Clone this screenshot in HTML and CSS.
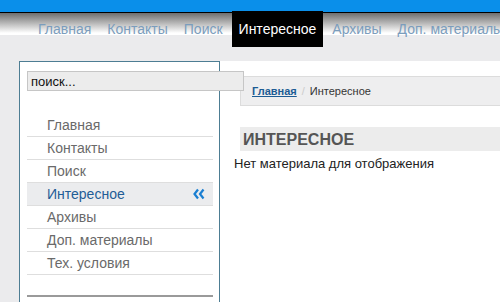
FILE: index.html
```html
<!DOCTYPE html>
<html lang="ru">
<head>
    <meta charset="UTF-8">
    <title>Интересное</title>
    <link rel="stylesheet" href="styles.css">
</head>
<body>
    <div class="topbar"></div>
    <div class="navbar">
        <ul class="nav">
            <li><a href="#">Главная</a></li>
            <li><a href="#">Контакты</a></li>
            <li><a href="#">Поиск</a></li>
            <li class="active"><a href="#">Интересное</a></li>
            <li><a href="#">Архивы</a></li>
            <li><a href="#">Доп. материалы</a></li>
            <li><a href="#">Тех. условия</a></li>
        </ul>
    </div>

    <div class="page">
        <div class="sidebar">
            <input class="search" type="text" value="поиск...">
            <ul class="menu">
                <li><a href="#">Главная</a></li>
                <li><a href="#">Контакты</a></li>
                <li><a href="#">Поиск</a></li>
                <li class="current">
                    <a href="#">Интересное</a>
                    <svg class="chevrons" width="12" height="12" viewBox="0 0 12 12">
                        <path d="M5 1.5 L1.5 6 L5 10.5" fill="none" stroke="#1a7fd2" stroke-width="2.2"/>
                        <path d="M10.5 1.5 L7 6 L10.5 10.5" fill="none" stroke="#1a7fd2" stroke-width="2.2"/>
                    </svg>
                </li>
                <li><a href="#">Архивы</a></li>
                <li><a href="#">Доп. материалы</a></li>
                <li><a href="#">Тех. условия</a></li>
            </ul>
            <div class="module"></div>
        </div>

        <div class="content">
            <div class="breadcrumbs">
                <a href="#">Главная</a>
                <span class="sep">/</span>
                <span>Интересное</span>
            </div>
            <h2 class="title">ИНТЕРЕСНОЕ</h2>
            <p class="empty">Нет материала для отображения</p>
        </div>
    </div>
</body>
</html>
```

FILE: styles.css
```css
html, body {
    overflow: hidden;
}
body {
    margin: 0;
    font-family: "Liberation Sans", Arial, sans-serif;
    background-color: #ebebed;
    height: 302px;
}
.topbar {
    height: 12px;
    background-color: #0a8fea;
}
.navbar {
    height: 22px;
    border-top: 1px solid #000;
    background: linear-gradient(#6e6e6e, #ffffff 20px);
    position: relative;
    z-index: 2;
}
.nav {
    list-style: none;
    margin: 0;
    padding: 0 0 0 31px;
    display: flex;
    white-space: nowrap;
}
.nav li {
    margin: -2px 2px 0 0;
    height: 36px;
}
.nav a {
    display: block;
    padding: 0 7px;
    line-height: 37px;
    font-size: 14px;
    color: #7b9dbd;
    text-decoration: none;
}
.nav .active {
    background-color: #000;
}
.nav .active a {
    color: #fff;
}
.page {
    margin: 26px 0 0 19px;
    width: 960px;
    height: 400px;
    background-color: #fff;
    display: flex;
}
.sidebar {
    width: 201px;
    box-sizing: border-box;
    border: 1px solid #4d7d93;
    padding: 9px 6px 0 7px;
    flex-shrink: 0;
}
.search {
    display: block;
    width: 217px;
    height: 20px;
    box-sizing: border-box;
    margin: 0;
    padding: 0 3px;
    border: 1px solid #c6c6c6;
    background-color: #ececec;
    font-family: "Liberation Sans", Arial, sans-serif;
    font-size: 13px;
    color: #111;
    position: relative;
    z-index: 1;
}
.menu {
    list-style: none;
    margin: 23px 0 0 0;
    padding: 0;
}
.menu li {
    height: 22px;
    border-bottom: 1px solid #dedede;
    display: flex;
    align-items: center;
    justify-content: space-between;
    padding: 0 8px 0 20px;
}
.menu a {
    font-size: 14px;
    color: #6a6a6a;
    text-decoration: none;
}
.menu .current {
    background-color: #ebecee;
}
.menu .current a {
    color: #1f5d96;
}
.module {
    margin-top: 20px;
    border-top: 2px solid #9a9a9a;
}
.content {
    margin-left: 14px;
    padding-top: 15px;
    flex: 1;
}
.breadcrumbs {
    margin-left: 6px;
    height: 28px;
    border: 1px solid #dcdcdc;
    background-color: #eeeeef;
    padding-left: 11px;
    display: flex;
    align-items: center;
    font-size: 11px;
    color: #333;
}
.breadcrumbs a {
    color: #1d5c94;
    font-weight: bold;
}
.sep {
    color: #ccc;
    margin: 0 5px;
}
.title {
    margin: 21px 0 0 6px;
    height: 24px;
    line-height: 25px;
    padding-left: 3px;
    background-color: #ececec;
    font-size: 16px;
    color: #555;
}
.empty {
    margin: 4px 0 0 0;
    font-size: 13px;
    line-height: 18px;
    color: #222;
}
```
